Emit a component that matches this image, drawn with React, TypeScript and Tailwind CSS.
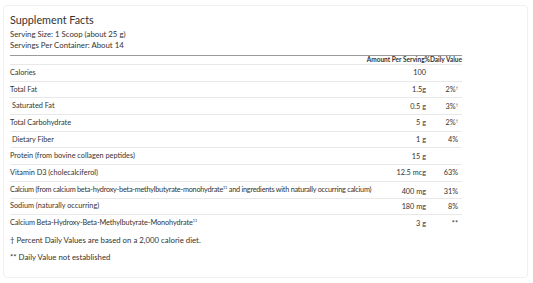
type Row = {
  label: React.ReactNode;
  amount: string;
  dv?: React.ReactNode;
  indent?: boolean;
  low?: boolean;
  track?: string;
};

const Sup = ({ children }: { children: React.ReactNode }) => (
  <sup className="text-[4px] leading-none -top-[3px]">{children}</sup>
);

const ROWS: Row[] = [
  { label: "Calories", amount: "100" },
  { label: "Total Fat", amount: "1.5g", dv: <>2%<Sup>†</Sup></> },
  { label: "Saturated Fat", amount: "0.5 g", dv: <>3%<Sup>†</Sup></>, indent: true },
  { label: "Total Carbohydrate", amount: "5 g", dv: <>2%<Sup>†</Sup></> },
  { label: "Dietary Fiber", amount: "1 g", dv: "4%", indent: true },
  { label: "Protein (from bovine collagen peptides)", amount: "15 g" },
  { label: "Vitamin D3 (cholecalciferol)", amount: "12.5 mcg", dv: "63%" },
  {
    label: (
      <>
        Calcium (from calcium beta-hydroxy-beta-methylbutyrate-monohydrate<Sup>11</Sup> and ingredients
        with naturally occurring calcium)
      </>
    ),
    amount: "400 mg",
    dv: "31%",
    low: true,
    track: "tracking-[-0.24px]",
  },
  { label: "Sodium (naturally occurring)", amount: "180 mg", dv: "8%" },
  {
    label: (
      <>
        Calcium Beta-Hydroxy-Beta-Methylbutyrate-Monohydrate<Sup>11</Sup>
      </>
    ),
    amount: "3 g",
    dv: "**",
    track: "tracking-[-0.1px]",
  },
];

export default function App() {
  return (
    <div className="w-[533px] h-[283px] bg-white pt-[5px] px-[3px] font-['Lato',sans-serif] text-[#333]">
      <div className="w-[525px] h-[273px] rounded-[4px] border border-[#f0f0f0] px-[6px] pt-[7px]">
        <h2 className="text-[10.8px] leading-[14px] text-[#333] m-0">Supplement Facts</h2>
        <p className="text-[7.8px] leading-[11px] mt-[2px]">Serving Size: 1 Scoop (about 25 g)</p>
        <p className="text-[7.8px] leading-[11px]">Servings Per Container: About 14</p>

        <table className="w-[452px] table-fixed mt-[4px] border-collapse text-[7.3px] leading-[9px]">
          <colgroup>
            <col />
            <col className="w-[60px]" />
            <col className="w-[36px]" />
          </colgroup>
          <thead>
            <tr className="border-t-[1.5px] border-t-[#9a9a9a] border-b border-b-[#e8e8e8]">
              <th className="p-0 h-[8px]" />
              <th
                colSpan={2}
                className="p-0 h-[8px] text-[6.5px] leading-[8px] font-bold text-right whitespace-nowrap"
              >
                Amount Per Serving%Daily Value
              </th>
            </tr>
          </thead>
          <tbody>
            {ROWS.map((r, i) => (
              <tr key={i} className={i < ROWS.length - 1 ? "border-b border-[#e8e8e8]" : ""}>
                <td
                  className={`h-[16.7px] p-0 pb-[1px] whitespace-nowrap ${r.indent ? "pl-[2px]" : ""} ${
                    r.track ?? ""
                  }`}
                >
                  {r.label}
                </td>
                <td className={`p-0 text-right whitespace-nowrap ${r.low ? "pt-[4px]" : ""}`}>
                  {r.amount}
                </td>
                <td className={`p-0 pr-[4px] text-right whitespace-nowrap ${r.low ? "pt-[4px]" : ""}`}>
                  {r.dv}
                </td>
              </tr>
            ))}
          </tbody>
        </table>

        <p className="text-[7.8px] leading-[11px] mt-[4px]">
          † Percent Daily Values are based on a 2,000 calorie diet.
        </p>
        <p className="text-[7.8px] leading-[11px] mt-[6px]">** Daily Value not established</p>
      </div>
    </div>
  );
}
